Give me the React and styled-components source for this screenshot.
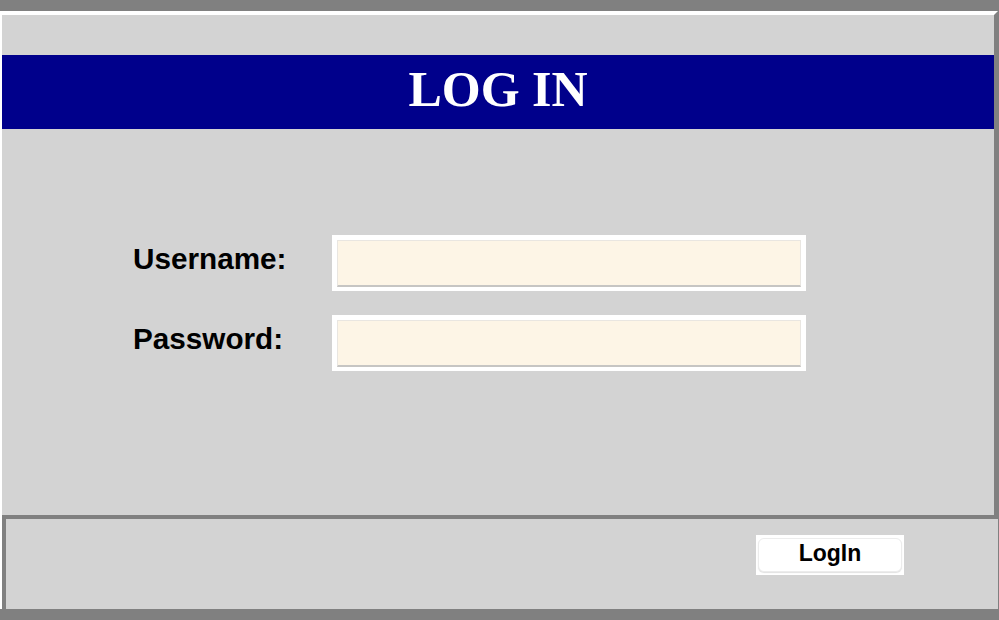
import React from "react";
import styled, { createGlobalStyle } from "styled-components";

const Global = createGlobalStyle`
  html, body { margin: 0; padding: 0; background: #808080; }
  body { width: 999px; height: 620px; overflow: hidden; }
  #root { width: 999px; }
`;

const Screen = styled.div`
  width: 999px;
  height: 620px;
  padding-top: 11px;
  box-sizing: border-box;
`;

const Frame = styled.div`
  width: 998px;
  border-left: 2px solid #ffffff;
  box-sizing: border-box;
  display: flex;
  flex-direction: column;
`;

const Panel = styled.section`
  height: 504px;
  box-sizing: border-box;
  border-top: 4px solid #ffffff;
  border-right: 4px solid #808080;
  background: #d3d3d3;
  padding-top: 40px;
  display: flex;
  flex-direction: column;
`;

const Header = styled.h1`
  margin: 0;
  height: 74px;
  background: #00008b;
  color: #ffffff;
  font-family: "Liberation Serif", "Times New Roman", serif;
  font-weight: bold;
  font-size: 50px;
  display: flex;
  align-items: center;
  justify-content: center;
  padding-bottom: 6px;
  box-sizing: border-box;
`;

const Form = styled.div`
  margin-top: 106px;
  padding-left: 131px;
  display: grid;
  grid-template-columns: 199px 474px;
  row-gap: 24px;
  align-items: center;
`;

const Label = styled.label`
  font-family: "Liberation Sans", Arial, Helvetica, sans-serif;
  font-weight: bold;
  font-size: 29.7px;
  color: #000;
  padding-bottom: ${(p) => p.$shift || 0}px;
`;

const FieldBox = styled.div`
  height: 56px;
  background: #ffffff;
  padding: 5px 5px 4px 5px;
  box-sizing: border-box;
  display: flex;
`;

const Input = styled.input`
  flex: 1;
  margin: 0;
  background: #fdf5e6;
  border: 1px solid #e9e6e1;
  border-bottom: 2px solid #c6c5c3;
  box-sizing: border-box;
  outline: none;
  font-size: 18px;
  font-family: "Liberation Sans", Arial, sans-serif;
  padding: 0 8px;
`;

const Footer = styled.footer`
  height: 94px;
  box-sizing: border-box;
  border-top: 4px solid #808080;
  border-left: 4px solid #808080;
  background: #d3d3d3;
  display: flex;
  justify-content: flex-end;
  align-items: flex-start;
  padding: 16px 94px 0 0;
`;

const ButtonBox = styled.div`
  width: 148px;
  height: 40px;
  background: #ffffff;
  padding: 3px 2px 3px 2px;
  box-sizing: border-box;
  display: flex;
`;

const Button = styled.button`
  flex: 1;
  margin: 0;
  background: #ffffff;
  border: 1px solid #ececec;
  border-radius: 6px;
  box-shadow: 0 1px 1px rgba(0, 0, 0, 0.12);
  font-family: "Liberation Sans", Arial, Helvetica, sans-serif;
  font-weight: bold;
  font-size: 23px;
  color: #000;
  padding: 0 0 3px 0;
  cursor: pointer;
`;

export default function App() {
  return (
    <>
      <Global />
      <Screen>
        <Frame>
          <Panel>
            <Header>LOG IN</Header>
            <Form>
              <Label htmlFor="u" $shift={8}>Username:</Label>
              <FieldBox>
                <Input id="u" type="text" />
              </FieldBox>
              <Label htmlFor="p" $shift={8}>Password:</Label>
              <FieldBox>
                <Input id="p" type="password" />
              </FieldBox>
            </Form>
          </Panel>
          <Footer>
            <ButtonBox>
              <Button>LogIn</Button>
            </ButtonBox>
          </Footer>
        </Frame>
      </Screen>
    </>
  );
}
